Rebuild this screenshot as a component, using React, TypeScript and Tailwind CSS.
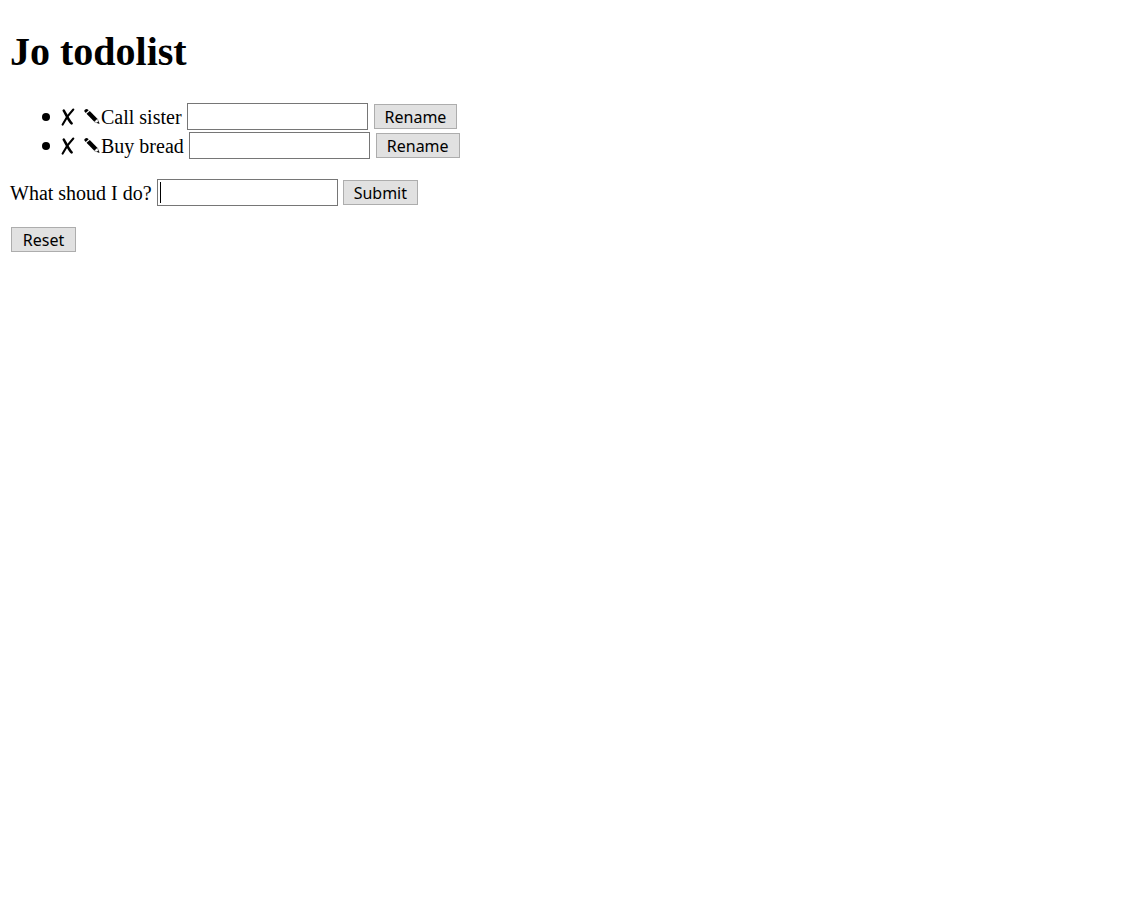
import { useState } from "react";

const buttonClass =
  "h-[25px] min-w-[65px] border border-[#adadad] bg-[#e1e1e1] px-[10px] pt-[2px] font-['Noto_Sans',sans-serif] text-base leading-[21px] text-black";
const inputClass =
  "h-[27px] w-[181px] border border-[#767676] bg-white px-[2px] font-['Noto_Sans',sans-serif] text-base outline-none";

function CrossIcon() {
  return (
    <svg width="16" height="20" viewBox="0 0 16 20" fill="none" stroke="#000" strokeLinecap="round">
      <path d="M3.8 3.6C5.6 6.5 8.6 13.5 11.6 16.4" strokeWidth="2.6" />
      <path d="M13.3 2.6C9.5 6.5 5.5 11.5 2.6 17.6" strokeWidth="2.1" />
    </svg>
  );
}

function PencilIcon() {
  return (
    <svg width="17" height="20" viewBox="0 0 17 20" fill="#000">
      <path d="M.4 4.4Q0 3.3 1.2 2.5 2.6 1.4 3.9 2.5L4.7 3.3 1.7 5.9.9 5.1Z" />
      <path d="M2.5 6.7 5.8 3.9 13.4 11.7 10.3 14.8Z" />
      <path d="M13.4 11.7 15.2 16.5 10.3 14.8" fill="none" stroke="#000" strokeWidth=".4" />
      <path d="M14.4 14.2 15.4 16.8 12.9 15.8Z" />
    </svg>
  );
}

function TodoItem({ name }: { name: string }) {
  return (
    <li className="flex h-[29px] items-start leading-[29px] before:mt-[10px] before:mr-[10px] before:-ml-[18px] before:size-2 before:rounded-full before:bg-black">
      <button type="button" aria-label={`Delete ${name}`} className="mt-1 h-5">
        <CrossIcon />
      </button>
      <button type="button" aria-label={`Edit ${name}`} className="mt-1 ml-2 h-5">
        <PencilIcon />
      </button>
      <span className="mr-[5px]">{name}</span>
      <input type="text" aria-label={`New name for ${name}`} className={inputClass} />
      <button type="button" className={`mt-px ml-[6px] ${buttonClass}`}>
        Rename
      </button>
    </li>
  );
}

export default function App() {
  const [text, setText] = useState("");
  return (
    <main className="min-h-screen bg-white px-[10px] pt-7 font-['Liberation_Serif',serif] text-xl text-black">
      <h1 className="text-[40px] leading-[48px] font-bold">Jo todolist</h1>
      <ul className="mt-[27px] pl-[50px]">
        <TodoItem name="Call sister" />
        <TodoItem name="Buy bread" />
      </ul>
      <form className="mt-[18px] flex items-start leading-[29px]" onSubmit={(e) => e.preventDefault()}>
        <label htmlFor="todo" className="mr-[5px]">
          What shoud I do?
        </label>
        <div className="relative flex">
          <input
            id="todo"
            type="text"
            value={text}
            onChange={(e) => setText(e.target.value)}
            className={inputClass}
          />
          {text === "" && <span className="pointer-events-none absolute top-[3px] left-[3px] h-[21px] w-px bg-black" />}
        </div>
        <button type="submit" className={`mt-px ml-[5px] ${buttonClass}`}>
          Submit
        </button>
      </form>
      <button type="button" className={`mt-[19px] ml-px block ${buttonClass}`}>
        Reset
      </button>
    </main>
  );
}
